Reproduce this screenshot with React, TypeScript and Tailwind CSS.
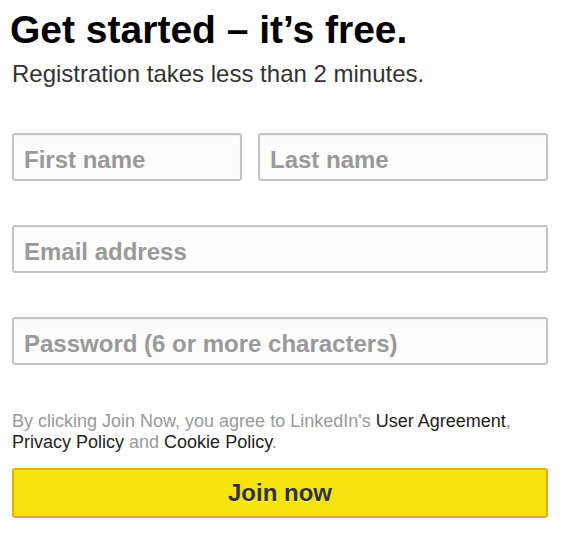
import React from 'react';

type FieldProps = {
  placeholder: string;
  type?: string;
  className?: string;
};

function Field({ placeholder, type = 'text', className = '' }: FieldProps) {
  return (
    <input
      type={type}
      placeholder={placeholder}
      className={`h-12 rounded-[3px] border-2 border-[#c4c4c4] bg-[#fdfdfd] px-[10px] pt-[6px] pb-0 text-[24px] font-bold text-[#333] shadow-[inset_0_1px_2px_rgba(0,0,0,0.06)] outline-none placeholder:text-[#999] ${className}`}
    />
  );
}

export default function App() {
  return (
    <div className="w-[564px] h-[535px] bg-white pl-3 pr-4 font-['Liberation_Sans',Arial,sans-serif]">
      <h1 className="pt-[7px] -ml-[2px] text-[39px] font-bold leading-[45px] text-black">
        Get started – it’s free.
      </h1>
      <p className="mt-2 text-[24px] leading-[28px] text-[#333]">
        Registration takes less than 2 minutes.
      </p>

      <form className="mt-[45px] flex flex-col">
        <div className="flex gap-4">
          <Field placeholder="First name" className="w-[230px]" />
          <Field placeholder="Last name" className="flex-1 min-w-0" />
        </div>
        <Field placeholder="Email address" type="email" className="mt-11 w-full" />
        <Field placeholder="Password (6 or more characters)" type="password" className="mt-11 w-full" />

        <p className="mt-[46px] text-[18px] leading-[21px] text-[#999]">
          By clicking Join Now, you agree to LinkedIn's{' '}
          <a className="text-[#222]">User Agreement</a>,{' '}
          <a className="text-[#222]">Privacy Policy</a> and{' '}
          <a className="text-[#222]">Cookie Policy</a>.
        </p>

        <button
          type="button"
          className="mt-[15px] h-[50px] w-full rounded-[3px] border-2 border-[#e7ac10] bg-[#f5e20f] text-[24px] font-bold text-[#333] shadow-[inset_0_1px_0_rgba(255,255,255,0.25)] [text-shadow:0_1px_1px_rgba(255,255,255,0.6)]"
        >
          Join now
        </button>
      </form>
    </div>
  );
}
